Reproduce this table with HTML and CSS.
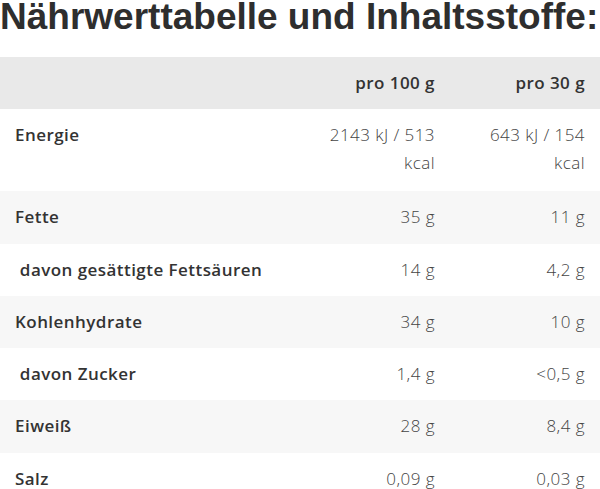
FILE: index.html
```html
<!DOCTYPE html>
<html lang="de">
<head>
<meta charset="utf-8">
<link rel="stylesheet" href="styles.css">
</head>
<body>
<h2 class="title">Nährwerttabelle und Inhaltsstoffe:</h2>
<table class="nutri">
  <thead>
    <tr><th></th><th>pro 100 g</th><th>pro 30 g</th></tr>
  </thead>
  <tbody>
    <tr class="energy"><td>Energie</td><td>2143 kJ / 513 kcal</td><td>643 kJ / 154 kcal</td></tr>
    <tr class="alt"><td>Fette</td><td>35 g</td><td>11 g</td></tr>
    <tr><td>&nbsp;davon gesättigte Fettsäuren</td><td>14 g</td><td>4,2 g</td></tr>
    <tr class="alt"><td>Kohlenhydrate</td><td>34 g</td><td>10 g</td></tr>
    <tr><td>&nbsp;davon Zucker</td><td>1,4 g</td><td>&lt;0,5 g</td></tr>
    <tr class="alt"><td>Eiweiß</td><td>28 g</td><td>8,4 g</td></tr>
    <tr><td>Salz</td><td>0,09 g</td><td>0,03 g</td></tr>
  </tbody>
</table>
</body>
</html>
```
FILE: styles.css
```css
html, body {
  margin: 0;
  padding: 0;
  background: #fff;
}
body {
  width: 600px;
  overflow: hidden;
  font-family: "Open Sans", "Lato", sans-serif;
  color: #333;
}
.title {
  margin: -2px 0 0 0;
  font-family: "Liberation Sans", Arial, sans-serif;
  font-weight: bold;
  font-size: 37px;
  line-height: 37px;
  letter-spacing: 0;
  color: #2e2e2e;
  white-space: nowrap;
  height: 59px;
}
.nutri {
  width: 600px;
  border-collapse: collapse;
  table-layout: fixed;
  font-size: 17px;
  letter-spacing: 0.45px;
}
.nutri th, .nutri td {
  padding: 12px 15px 12.3px;
  line-height: 28px;
  vertical-align: top;
}
.nutri tr.energy td {
  padding-bottom: 14px;
}
.nutri th:first-child, .nutri td:first-child {
  width: 270px;
  text-align: left;
  font-weight: 600;
  color: #333;
}
.nutri th:nth-child(2), .nutri td:nth-child(2),
.nutri th:nth-child(3), .nutri td:nth-child(3) {
  width: 120px;
  text-align: right;
}
.nutri thead tr {
  background: #e9e9e9;
}
.nutri th {
  font-weight: 600;
  color: #333;
}
.nutri td {
  font-weight: 300;
  color: #444;
}
.nutri tr.alt {
  background: #f7f7f7;
}
```
